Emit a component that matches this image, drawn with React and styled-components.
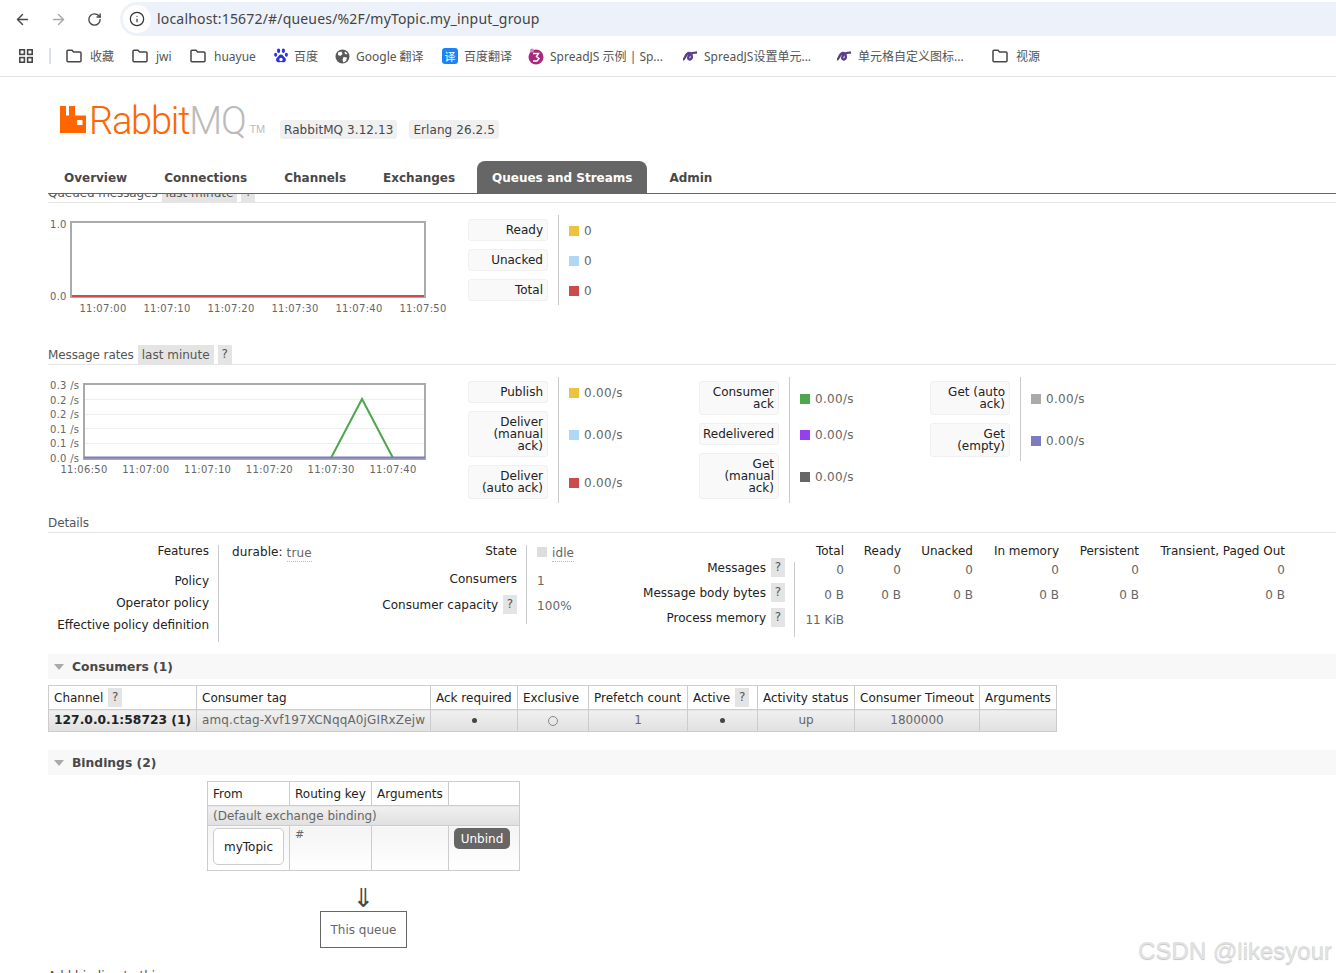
import React from "react";
import styled, { createGlobalStyle } from "styled-components";
import { ArrowLeft, ArrowRight, RotateCw, Info } from "lucide-react";

const Global = createGlobalStyle`
  html, body { margin: 0; padding: 0; background: #fff; height: 973px; overflow: hidden; }
  body { font-family: "DejaVu Sans", Verdana, sans-serif; font-size: 12px; color: #484848; }
  * { box-sizing: border-box; }
`;

const Page = styled.div`
  position: relative;
  width: 1336px;
  height: 973px;
  overflow: hidden;
`;

/* ---------- browser chrome ---------- */
const AddressRow = styled.div`
  height: 36px;
  display: flex;
  align-items: flex-end;
`;
const NavButton = styled.div`
  width: 36px;
  height: 34px;
  display: flex;
  align-items: center;
  justify-content: center;
  color: ${(p) => (p.$off ? "#a8a8a8" : "#474747")};
`;
const NavGroup = styled.div`
  display: flex;
  padding-left: 4px;
  width: 120px;
`;
const UrlPill = styled.div`
  flex: 1;
  height: 34px;
  background: #edf2fa;
  border-radius: 17px 0 0 17px;
  display: flex;
  align-items: center;
  padding: 0 0 1px 3px;
  font-family: "Noto Sans", sans-serif;
  font-size: 14px;
  letter-spacing: 0.18px;
  color: #444;
`;
const InfoDot = styled.div`
  width: 28px;
  height: 28px;
  margin-right: 6px;
  border-radius: 50%;
  background: #fff;
  display: flex;
  align-items: center;
  justify-content: center;
  color: #333;
`;
const BookmarkBar = styled.div`
  height: 41px;
  display: flex;
  align-items: center;
  padding-left: 19px;
  border-bottom: 1px solid #e3e3e3;
  font-family: "Noto Sans", "Noto Sans CJK SC", sans-serif;
  font-size: 12px;
  color: #555;
`;
const Divider = styled.div`
  width: 2px;
  height: 16px;
  background: #d5e2f6;
  margin: 0 15px 0 16px;
`;
const Bookmark = styled.div`
  width: ${(p) => p.$w}px;
  display: flex;
  align-items: center;
  gap: ${(p) => p.$gap ?? 8}px;
  white-space: nowrap;
  flex-shrink: 0;
`;
const TranslateIcon = styled.span`
  width: 16px;
  height: 16px;
  border-radius: 3px;
  background: #1a84f5;
  color: #fff;
  font-size: 11px;
  line-height: 16px;
  text-align: center;
  font-family: "Noto Sans CJK SC", sans-serif;
`;

const FolderIcon = () => (
  <svg width="16" height="14" viewBox="0 0 16 14" fill="none" stroke="#474747" strokeWidth="1.5">
    <path d="M1 2.2c0-.6.4-1 1-1h4l1.6 1.8H14c.6 0 1 .4 1 1v7.8c0 .6-.4 1-1 1H2c-.6 0-1-.4-1-1Z" />
  </svg>
);
const AppsIcon = () => (
  <svg width="14" height="14" viewBox="0 0 14 14" fill="none" stroke="#474747" strokeWidth="1.6">
    <rect x="0.8" y="0.8" width="4.6" height="4.6" />
    <rect x="8.6" y="0.8" width="4.6" height="4.6" />
    <rect x="0.8" y="8.6" width="4.6" height="4.6" />
    <rect x="8.6" y="8.6" width="4.6" height="4.6" />
  </svg>
);
const PawIcon = () => (
  <svg width="14" height="16" viewBox="0 0 14 16" fill="#2932e1">
    <ellipse cx="4.6" cy="2.8" rx="1.6" ry="2.2" />
    <ellipse cx="9.4" cy="2.8" rx="1.6" ry="2.2" />
    <ellipse cx="1.6" cy="6.8" rx="1.5" ry="2" />
    <ellipse cx="12.4" cy="6.8" rx="1.5" ry="2" />
    <path d="M7 6.5c2 0 2.6 2 4 3.2 1.6 1.4 1 4.6-1.6 4.6-1 0-1.6-.3-2.4-.3s-1.4.3-2.4.3C2 14.300 1.400 11.100 3 9.700 4.400 8.500 5 6.500 7 6.500Z" />
    <circle cx="7" cy="11.500" r="1.700" fill="#fff" />
  </svg>
);
const GlobeIcon = () => (
  <svg width="15" height="15" viewBox="0 0 15 15">
    <circle cx="7.500" cy="7.500" r="7" fill="#5a5a5a" />
    <path d="M3 3.500 6.500 2.500 7.500 5 5.500 7 3 6ZM8.500 8 12 8.500 11 12 8.500 13.500 7.500 11ZM10 2.500l2.500 2-1.500 1-1.500-1.500Z" fill="#fff" />
  </svg>
);
const SpreadIcon = () => (
  <svg width="16" height="17" viewBox="0 0 16 17">
    <circle cx="8" cy="9" r="7.500" fill="#a8287c" />
    <circle cx="4" cy="2.500" r="2" fill="#c98ab5" />
    <path d="M5 5.500h5.500l-2 3 2.500 2-2 2.500H5" fill="none" stroke="#fff" strokeWidth="1.500" />
  </svg>
);
const KnotIcon = () => (
  <svg width="16" height="12" viewBox="0 0 16 12" fill="none" stroke="#5b3f8c" strokeWidth="2.400">
    <path d="M1 9.500C3 9.500 3.500 3 7 3c3 0 4 6 1 6.500-3 .4-2-4.500 1-6 1.500-.8 4-.8 6-1" />
  </svg>
);

/* ---------- rabbit header ---------- */
const Main = styled.div`
  padding-left: 48px;
`;
const LogoRow = styled.div`
  height: 84px;
  display: flex;
  align-items: flex-start;
`;
const LogoMark = styled.div`
  display: flex;
  align-items: flex-end;
  height: 36px;
  margin: 27px 0 0 12px;
  width: 220px;
  flex-shrink: 0;
`;
const LogoGlyph = styled.svg`
  display: block;
  flex-shrink: 0;
  margin-bottom: 7px;
`;
const LogoWord = styled.div`
  font-family: Roboto, sans-serif;
  font-weight: 300;
  font-size: 38px;
  line-height: 36px;
  color: #ff6600;
  margin: 0 0 1px 3px;
  white-space: nowrap;
  letter-spacing: -1.2px;
`;
const LogoGrey = styled.span`
  color: #bbb;
`;
const LogoTm = styled.span`
  font-family: "Liberation Sans", sans-serif;
  font-size: 11px;
  line-height: 10px;
  color: #bbb;
  margin: 0 0 6px 4px;
  letter-spacing: -0.2px;
`;
const VersionBadge = styled.span`
  height: 19px;
  margin-top: 43px;
  margin-right: 12px;
  padding: 1px 4px 0;
  line-height: 18px;
  background: #f0f0f0;
  border-radius: 3px;
  white-space: nowrap;
  letter-spacing: 0.08px;
`;
const Tabs = styled.nav`
  display: flex;
  gap: 7px;
  height: 33px;
  border-bottom: 1px solid #666;
  padding-left: 1px;
`;
const Tab = styled.div`
  height: 32px;
  padding: 1px 15px 0;
  display: flex;
  align-items: center;
  font-weight: 700;
  white-space: nowrap;
  letter-spacing: -0.01px;
  color: ${(p) => (p.$active ? "#fff" : "#484848")};
  background: ${(p) => (p.$active ? "#666" : "transparent")};
  border-radius: 8px 8px 0 0;
`;

/* ---------- section headings ---------- */
const Heading = styled.div`
  display: flex;
  align-items: center;
  gap: 4px;
  height: 20px;
  margin-top: ${(p) => p.$top ?? 0}px;
  border-bottom: 1px solid #e5e5e5;
  color: #555;
  letter-spacing: -0.1px;
`;
const ClippedHeading = styled.div`
  display: flex;
  align-items: flex-end;
  gap: 4px;
  height: 9px;
  overflow: hidden;
  border-bottom: 1px solid #e5e5e5;
  color: #555;
  letter-spacing: -0.1px;
`;
const ClippedInner = styled.div`
  display: flex;
  align-items: center;
  gap: 4px;
  flex-shrink: 0;
  height: 19px;
`;
const RangeTag = styled.span`
  height: 19px;
  line-height: 20px;
  padding: 0 4px;
  background: #e4e4e4;
  color: #555;
  letter-spacing: 0;
`;
const Help = styled.span`
  display: inline-block;
  width: 14px;
  height: 19px;
  line-height: 19px;
  text-align: center;
  background: #e4e4e4;
  color: #555;
  font-weight: 400;
  flex-shrink: 0;
`;

/* ---------- charts + legends ---------- */
const ChartRow = styled.div`
  display: flex;
  align-items: flex-start;
  height: ${(p) => p.$h}px;
  margin-top: 12px;
`;
const ChartSvg = styled.svg`
  display: block;
  flex-shrink: 0;
  overflow: visible;
  font-family: "DejaVu Sans", sans-serif;
  font-size: 10px;
  letter-spacing: 0.28px;
  fill: #666;
`;
const Legend = styled.div`
  display: grid;
  grid-template-columns: 90px 141px;
  width: 231px;
  flex-shrink: 0;
`;
const LabelCell = styled.div`
  padding: 4px 10px 4px 0;
`;
const LabelBox = styled.div`
  width: 80px;
  padding: 4px 4px 4px 3px;
  line-height: 12px;
  text-align: right;
  color: #222;
  background: #f9f9f9;
  border: 1px solid #f0f0f0;
  border-radius: 3px;
  white-space: nowrap;
`;
const ValueCell = styled.div`
  border-left: 1px solid #ccc;
  padding: 2px 0 0 10px;
  display: flex;
  align-items: center;
  gap: 5px;
  color: #666;
  letter-spacing: 0.3px;
`;
const Swatch = styled.span`
  width: 10px;
  height: 10px;
  background: ${(p) => p.$c};
  flex-shrink: 0;
`;

const LegendBlock = ({ rows }) => (
  <Legend>
    {rows.map(([label, colour, value]) => (
      <React.Fragment key={label}>
        <LabelCell>
          <LabelBox>
            {label.split("\n").map((l, i) => (
              <div key={i}>{l}</div>
            ))}
          </LabelBox>
        </LabelCell>
        <ValueCell>
          <Swatch $c={colour} />
          {value}
        </ValueCell>
      </React.Fragment>
    ))}
  </Legend>
);

const QueuedChart = () => (
  <ChartSvg width="420" height="90" viewBox="0 0 420 90">
    <rect x="23" y="7" width="354" height="75" fill="#fff" stroke="#aaa" strokeWidth="2" />
    <line x1="24" x2="376" y1="81" y2="81" stroke="#cb4b4b" strokeWidth="2" />
    <text x="2" y="13">1.0</text>
    <text x="2" y="85">0.0</text>
    {["11:07:00", "11:07:10", "11:07:20", "11:07:30", "11:07:40", "11:07:50"].map((t, i) => (
      <text key={t} x={55 + i * 64} y="97" textAnchor="middle">{t}</text>
    ))}
  </ChartSvg>
);

const RateChart = () => (
  <ChartSvg width="420" height="100" viewBox="0 0 420 100">
    {[22.5, 37.5, 51.5, 66.5].map((y) => (
      <line key={y} x1="36" x2="377" y1={y} y2={y} stroke="#eee" strokeWidth="1" />
    ))}
    <rect x="36" y="7" width="341" height="75" fill="none" stroke="#aaa" strokeWidth="2" />
    <polyline points="283,81 314,22 345,81" fill="none" stroke="#4da74d" strokeWidth="2" />
    <line x1="36" x2="377" y1="80.500" y2="80.500" stroke="#7d7cc2" strokeWidth="2" />
    {[["0.3", 12], ["0.2", 27], ["0.2", 41], ["0.1", 56], ["0.1", 70], ["0.0", 85]].map(([t, y]) => (
      <text key={y} x="2" y={y}>{t} /s</text>
    ))}
    {["11:06:50", "11:07:00", "11:07:10", "11:07:20", "11:07:30", "11:07:40"].map((t, i) => (
      <text key={t} x={36 + i * 61.8} y="96" textAnchor="middle">{t}</text>
    ))}
  </ChartSvg>
);

/* ---------- details ---------- */
const DetailsRow = styled.div`
  display: flex;
  align-items: flex-start;
  margin-top: 12px;
  height: 97px;
  line-height: 12px;
`;
const FeatureTable = styled.div`
  display: grid;
  grid-template-columns: ${(p) => p.$cols};
  grid-template-rows: ${(p) => p.$rows};
  flex-shrink: 0;
`;
const Key = styled.div`
  padding-right: 9px;
  text-align: right;
  color: #222;
  white-space: nowrap;
  display: flex;
  justify-content: flex-end;
  align-items: ${(p) => (p.$center ? "center" : "flex-start")};
  gap: 5px;
  height: ${(p) => (p.$center ? "19px" : "auto")};
`;
const Val = styled.div`
  border-left: 1px solid #ccc;
  padding-left: ${(p) => p.$pad ?? 10}px;
  padding-top: ${(p) => p.$top ?? 0}px;
  color: #666;
  white-space: nowrap;
  letter-spacing: 0.1px;
`;
const DurableKey = styled.span`
  color: #222;
`;
const Dotted = styled.abbr`
  text-decoration: none;
  border-bottom: 1px dotted #bbb;
  color: #666;
  position: relative;
  top: 1px;
  padding-bottom: 1px;
`;
const StateSwatch = styled.span`
  display: inline-block;
  width: 10px;
  height: 10px;
  background: #ddd;
  margin-right: 5px;
  vertical-align: -1px;
`;
const CapKey = styled(Key)`
  margin-top: -4px;
`;
const ColHead = styled.div`
  text-align: right;
  color: #222;
  white-space: nowrap;
`;
const Num = styled.div`
  text-align: right;
  padding-top: 2px;
  color: #666;
  white-space: nowrap;
  border-left: ${(p) => (p.$first ? "1px solid #ccc" : "0")};
`;

/* ---------- collapsible bands + tables ---------- */
const Band = styled.div`
  height: 25px;
  margin-top: ${(p) => p.$top}px;
  background: #f8f8f8;
  display: flex;
  align-items: center;
  font-weight: 700;
  color: #484848;
  font-size: 12.300px;
`;
const Triangle = styled.span`
  width: 0;
  height: 0;
  margin: 1px 8px 0 6px;
  border-left: 5.500px solid transparent;
  border-right: 5.500px solid transparent;
  border-top: 6px solid #aaa;
`;
const DataTable = styled.table`
  table-layout: fixed;
  border-collapse: collapse;
  width: ${(p) => p.$w}px;
  margin: 6px 0 0 ${(p) => p.$left ?? 0}px;
  font-size: 12px;
`;
const HeadCell = styled.th`
  height: 24px;
  padding: 0 5px;
  border: 1px solid #ccc;
  background: #fff;
  font-weight: 400;
  color: #222;
  text-align: left;
  white-space: nowrap;
`;
const HelpGap = styled(Help)`
  margin-left: 5px;
  vertical-align: 1px;
`;
const RowCell = styled.td`
  height: ${(p) => p.$h ?? 22}px;
  padding: 0 5px 1px;
  border: 1px solid #ccc;
  background: linear-gradient(#f0f0f0, #e0e0e0);
  color: #666;
  text-align: ${(p) => p.$align ?? "center"};
  white-space: nowrap;
  overflow: hidden;
`;
const TagCell = styled(RowCell)`
  letter-spacing: 0.13px;
`;
const ExchangeHeadCell = styled(RowCell)`
  padding: 0 5px;
`;
const ChannelCell = styled(RowCell)`
  font-weight: 700;
  color: #222;
  font-size: 12.300px;
  padding: 0 4px 1px 5px;
`;
const BodyCell = styled.td`
  height: 45px;
  padding: 2px 5px;
  border: 1px solid #ccc;
  background: linear-gradient(#f4f4f4, #fff);
  color: #666;
  vertical-align: top;
`;
const Hash = styled.span`
  display: block;
  margin-top: 1px;
  font-size: 11px;
  line-height: 12px;
`;
const Dot = styled.span`
  display: inline-block;
  width: 5px;
  height: 5px;
  border-radius: 50%;
  background: #444;
  vertical-align: 1px;
`;
const Ring = styled.span`
  display: inline-block;
  width: 10px;
  height: 10px;
  border-radius: 50%;
  border: 1px solid #888;
  vertical-align: -2px;
`;
const ExchangeLink = styled.div`
  width: 71px;
  height: 37px;
  display: flex;
  align-items: center;
  justify-content: center;
  background: #fff;
  border: 1px solid #ccc;
  border-radius: 5px;
  color: #222;
`;
const Unbind = styled.button`
  display: block;
  width: 56px;
  height: 21px;
  margin: 0;
  padding: 0;
  border: 0;
  border-radius: 5px;
  background: #666;
  color: #fff;
  font: 12px "DejaVu Sans", sans-serif;
`;
const QueueFlow = styled.div`
  margin-left: 272px;
  width: 87px;
  display: flex;
  flex-direction: column;
  align-items: center;
`;
const DownArrow = styled.div`
  height: 26px;
  margin-top: 14px;
  font-size: 26px;
  line-height: 26px;
  color: #484848;
`;
const ThisQueue = styled.div`
  width: 87px;
  height: 37px;
  display: flex;
  align-items: center;
  justify-content: center;
  border: 1px solid #666;
  color: #666;
`;
const AddBinding = styled.div`
  margin-top: 21px;
  color: #484848;
  line-height: 14px;
`;
const Watermark = styled.div`
  position: absolute;
  right: 4px;
  top: 937px;
  font-family: "Liberation Sans", Arial, sans-serif;
  font-size: 24px;
  line-height: 28px;
  color: #e2e2e2;
  text-shadow: 0 1px 1px #c4c4c4;
  pointer-events: none;
`;

const consumerCols = [148, 234, 87, 71, 99, 70, 97, 125, 77];
const bindingCols = [82, 82, 77, 71];
const Cols = ({ list }) => (
  <colgroup>
    {list.map((w, i) => (
      <col key={i} style={{ width: w }} />
    ))}
  </colgroup>
);

export default function App() {
  return (
    <Page>
      <Global />
      <AddressRow>
        <NavGroup>
          <NavButton><ArrowLeft size={17} strokeWidth={2} /></NavButton>
          <NavButton $off><ArrowRight size={17} strokeWidth={2} /></NavButton>
          <NavButton><RotateCw size={15} strokeWidth={2.2} /></NavButton>
        </NavGroup>
        <UrlPill>
          <InfoDot><Info size={16} strokeWidth={1.8} /></InfoDot>
          localhost:15672/#/queues/%2F/myTopic.my_input_group
        </UrlPill>
      </AddressRow>
      <BookmarkBar>
        <AppsIcon />
        <Divider />
        <Bookmark $w={66}><FolderIcon />收藏</Bookmark>
        <Bookmark $w={58}><FolderIcon />jwi</Bookmark>
        <Bookmark $w={84}><FolderIcon />huayue</Bookmark>
        <Bookmark $w={61} $gap={6}><PawIcon />百度</Bookmark>
        <Bookmark $w={107} $gap={6}><GlobeIcon />Google 翻译</Bookmark>
        <Bookmark $w={86} $gap={6}><TranslateIcon>译</TranslateIcon>百度翻译</Bookmark>
        <Bookmark $w={154} $gap={6}><SpreadIcon />SpreadJS 示例 | Sp...</Bookmark>
        <Bookmark $w={154} $gap={6}><KnotIcon />SpreadJS设置单元...</Bookmark>
        <Bookmark $w={156} $gap={6}><KnotIcon />单元格自定义图标...</Bookmark>
        <Bookmark $w={60}><FolderIcon />视源</Bookmark>
      </BookmarkBar>

      <Main>
        <LogoRow>
          <LogoMark>
            <LogoGlyph width="26" height="27" viewBox="0 0 26 27">
              <path fillRule="evenodd" fill="#ff6600" d="M0 0h6v9.500h3V0h6v9.500h11V27H0ZM17 14v5h5.500v-5Z" />
            </LogoGlyph>
            <LogoWord>Rabbit<LogoGrey>MQ</LogoGrey></LogoWord>
            <LogoTm>TM</LogoTm>
          </LogoMark>
          <VersionBadge>RabbitMQ 3.12.13</VersionBadge>
          <VersionBadge>Erlang 26.2.5</VersionBadge>
        </LogoRow>
        <Tabs>
          <Tab>Overview</Tab>
          <Tab>Connections</Tab>
          <Tab>Channels</Tab>
          <Tab>Exchanges</Tab>
          <Tab $active>Queues and Streams</Tab>
          <Tab>Admin</Tab>
        </Tabs>

        <ClippedHeading>
          <ClippedInner>
            Queued messages <RangeTag>last minute</RangeTag> <Help>?</Help>
          </ClippedInner>
        </ClippedHeading>
        <ChartRow $h={90}>
          <QueuedChart />
          <LegendBlock rows={[["Ready", "#edc240", "0"], ["Unacked", "#afd8f8", "0"], ["Total", "#cb4b4b", "0"]]} />
        </ChartRow>

        <Heading $top={40}>
          Message rates <RangeTag>last minute</RangeTag> <Help>?</Help>
        </Heading>
        <ChartRow $h={126}>
          <RateChart />
          <LegendBlock rows={[["Publish", "#edc240", "0.00/s"], ["Deliver\n(manual\nack)", "#afd8f8", "0.00/s"], ["Deliver\n(auto ack)", "#cb4b4b", "0.00/s"]]} />
          <LegendBlock rows={[["Consumer\nack", "#4da74d", "0.00/s"], ["Redelivered", "#9440ed", "0.00/s"], ["Get\n(manual\nack)", "#666", "0.00/s"]]} />
          <LegendBlock rows={[["Get (auto\nack)", "#aaa", "0.00/s"], ["Get\n(empty)", "#7d7cc2", "0.00/s"]]} />
        </ChartRow>

        <Heading $top={10}>Details</Heading>
        <DetailsRow>
          <FeatureTable $cols="170px 132px" $rows="30px 22px 22px 23px">
            <Key>Features</Key>
            <Val $pad={13} $top={1}><DurableKey>durable:</DurableKey> <Dotted>true</Dotted></Val>
            <Key>Policy</Key><Val />
            <Key>Operator policy</Key><Val />
            <Key>Effective policy definition</Key><Val />
          </FeatureTable>
          <FeatureTable $cols="176px 74px" $rows="28px 22px 29px">
            <Key>State</Key>
            <Val $top={1}><StateSwatch /><Dotted>idle</Dotted></Val>
            <Key>Consumers</Key>
            <Val $top={2}>1</Val>
            <Key $center>Consumer capacity<Help>?</Help></Key>
            <Val $top={5}>100%</Val>
          </FeatureTable>
          <FeatureTable $cols="194px 50px 57px 72px 86px 80px 146px" $rows="17px 25px 25px 25px">
            <div />
            <ColHead>Total</ColHead>
            <ColHead>Ready</ColHead>
            <ColHead>Unacked</ColHead>
            <ColHead>In memory</ColHead>
            <ColHead>Persistent</ColHead>
            <ColHead>Transient, Paged Out</ColHead>

            <CapKey $center>Messages<Help>?</Help></CapKey>
            <Num $first>0</Num><Num>0</Num><Num>0</Num><Num>0</Num><Num>0</Num><Num>0</Num>

            <CapKey $center>Message body bytes<Help>?</Help></CapKey>
            <Num $first>0 B</Num><Num>0 B</Num><Num>0 B</Num><Num>0 B</Num><Num>0 B</Num><Num>0 B</Num>

            <CapKey $center>Process memory<Help>?</Help></CapKey>
            <Num $first>11 KiB</Num><div /><div /><div /><div /><div />
          </FeatureTable>
        </DetailsRow>

        <Band $top={12}><Triangle />Consumers (1)</Band>
        <DataTable $w={1009}>
          <Cols list={consumerCols} />
          <thead>
            <tr>
              <HeadCell>Channel<HelpGap>?</HelpGap></HeadCell>
              <HeadCell>Consumer tag</HeadCell>
              <HeadCell>Ack required</HeadCell>
              <HeadCell>Exclusive</HeadCell>
              <HeadCell>Prefetch count</HeadCell>
              <HeadCell>Active<HelpGap>?</HelpGap></HeadCell>
              <HeadCell>Activity status</HeadCell>
              <HeadCell>Consumer Timeout</HeadCell>
              <HeadCell>Arguments</HeadCell>
            </tr>
          </thead>
          <tbody>
            <tr>
              <ChannelCell $align="left">127.0.0.1:58723 (1)</ChannelCell>
              <TagCell $align="left">amq.ctag-Xvf197XCNqqA0jGIRxZejw</TagCell>
              <RowCell><Dot /></RowCell>
              <RowCell><Ring /></RowCell>
              <RowCell>1</RowCell>
              <RowCell><Dot /></RowCell>
              <RowCell>up</RowCell>
              <RowCell>1800000</RowCell>
              <RowCell />
            </tr>
          </tbody>
        </DataTable>

        <Band $top={18}><Triangle />Bindings (2)</Band>
        <DataTable $w={312} $left={159}>
          <Cols list={bindingCols} />
          <thead>
            <tr>
              <HeadCell>From</HeadCell>
              <HeadCell>Routing key</HeadCell>
              <HeadCell>Arguments</HeadCell>
              <HeadCell />
            </tr>
          </thead>
          <tbody>
            <tr>
              <ExchangeHeadCell $h={20} $align="left" colSpan={4}>(Default exchange binding)</ExchangeHeadCell>
            </tr>
            <tr>
              <BodyCell><ExchangeLink>myTopic</ExchangeLink></BodyCell>
              <BodyCell><Hash>#</Hash></BodyCell>
              <BodyCell />
              <BodyCell><Unbind>Unbind</Unbind></BodyCell>
            </tr>
          </tbody>
        </DataTable>
        <QueueFlow>
          <DownArrow>⇓</DownArrow>
          <ThisQueue>This queue</ThisQueue>
        </QueueFlow>
        <AddBinding>Add binding to this queue</AddBinding>
      </Main>
      <Watermark>CSDN @likesyour</Watermark>
    </Page>
  );
}
